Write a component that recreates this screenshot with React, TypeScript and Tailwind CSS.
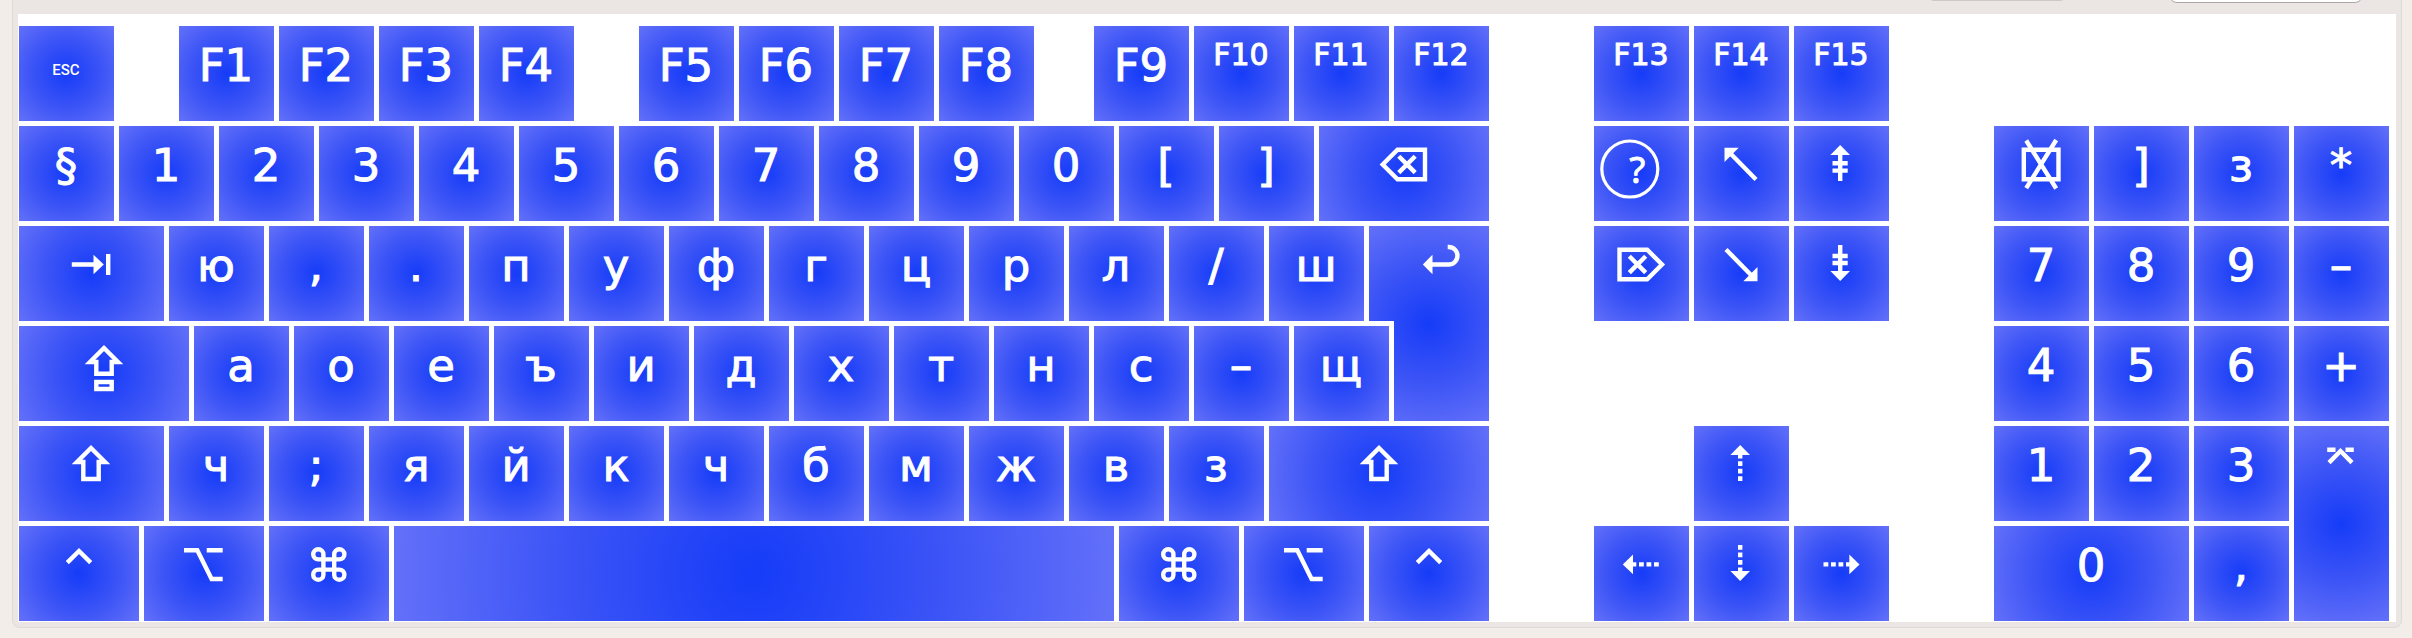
import type { ReactNode } from "react";

const triangle = "fill-white stroke-none";

const icons: Record<string, ReactNode> = {
  tab: (
    <>
      <path d="M10.8 26.5H33M47.2 16V37" />
      <path className={triangle} d="M32.5 16.8L42.8 26.5L32.5 36.3Z" />
    </>
  ),
  caps: (
    <>
      <path d="M30 10L16 24H22.3V35.7H37.7V24H44Z" />
      <path d="M22.3 44H37.7V51H22.3Z" />
    </>
  ),
  shift: <path d="M30 10L16 24H22.3V41H37.7V24H44Z" />,
  control: <path d="M18.3 24.6L30 13L41.7 24.6" />,
  option: <path d="M10 12.2H23.3L37.6 41H48.7M32.7 12.2H48.7" />,
  command: (
    <path d="M24.4 16.3a5.1 5.1 0 1 0-5.1 5.1H40.3a5.1 5.1 0 1 0-5.1-5.1V36.7a5.1 5.1 0 1 0 5.1-5.1H19.3a5.1 5.1 0 1 0 5.1 5.1Z" />
  ),
  backspace: (
    <path d="M51 11.7H23.5L8.7 26.5L23.5 41.2H51ZM24.8 18.2L41.2 34.6M41.2 18.2L24.8 34.6" />
  ),
  forwardDelete: (
    <path d="M8.5 11.7H36.2L51 26.5L36.2 41.2H8.5ZM18.3 18.2L34.7 34.6M34.7 18.2L18.3 34.6" />
  ),
  enter: (
    <>
      <path d="M21 26.5H37.7a8.75 8.75 0 0 0 0-17.5H36.7" />
      <path className={triangle} d="M21.5 16.8L11.8 26.5L21.5 36.3Z" />
    </>
  ),
  help: (
    <>
      <circle cx="18.8" cy="31" r="28" strokeWidth="3.2" />
      <text
        x="26.3"
        y="44.5"
        textAnchor="middle"
        className="fill-white stroke-white font-['Noto_Sans',sans-serif] text-[37px]"
        strokeWidth="0.8"
      >
        ?
      </text>
    </>
  ),
  home: (
    <>
      <path d="M18 14L45 41.5" />
      <path className={triangle} d="M13.5 9.7H27.7L13.5 23.9Z" />
    </>
  ),
  end: (
    <>
      <path d="M15 11.5L42 39" />
      <path className={triangle} d="M46.5 43.2H32.3L46.5 29Z" />
    </>
  ),
  pageUp: (
    <>
      <path d="M29.2 16V43M21.5 25.3H36.7M21.5 32.6H36.7" />
      <path className={triangle} d="M29.2 7L39 17H19.4Z" />
    </>
  ),
  pageDown: (
    <>
      <path d="M29.2 7V34M21.5 18H36.7M21.5 25H36.7" />
      <path className={triangle} d="M29.2 43L39 33H19.4Z" />
    </>
  ),
  up: (
    <>
      <path d="M29.2 43V16.5" strokeDasharray="4.8 2.7" />
      <path className={triangle} d="M29.2 7L39 17H19.4Z" />
    </>
  ),
  down: (
    <>
      <path d="M29.2 7V33.5" strokeDasharray="4.8 2.7" />
      <path className={triangle} d="M29.2 43L39 33H19.4Z" />
    </>
  ),
  left: (
    <>
      <path d="M47.8 26.4H21.5" strokeDasharray="4.8 2.7" />
      <path className={triangle} d="M11.8 26.4L22 16.6V36.2Z" />
    </>
  ),
  right: (
    <>
      <path d="M12.5 26.4H38.8" strokeDasharray="4.8 2.7" />
      <path className={triangle} d="M48.5 26.4L38.3 16.6V36.2Z" />
    </>
  ),
  clear: (
    <path d="M12.8 11.7H47.5V41.2H12.8ZM15.2 2.5L45.2 50.5M45.2 2L15.2 50.2" />
  ),
  keypadEnter: (
    <path d="M18 24.6L29.5 13L41 24.6M16.2 11.7H24.5M34.5 11.7H42.8" />
  ),
};

type KeyProps = {
  label?: string;
  icon?: string;
  name?: string;
  className?: string;
};

function textSize(label: string) {
  if (label === "ESC")
    return "font-[Roboto,sans-serif] text-[15px] leading-[64px] font-medium";
  if (label.length > 2)
    return "text-[30px] leading-[33px] [-webkit-text-stroke:1px_white]";
  return "text-[45px] leading-[55px] [-webkit-text-stroke:1px_white]";
}

function Key({ label, icon, name, className = "flex-[95]" }: KeyProps) {
  return (
    <button
      type="button"
      aria-label={name}
      className={`flex h-full min-w-0 items-start justify-center bg-[radial-gradient(circle_farthest-corner,#163cf8,#3a53f6_50%,#6370f9)] pt-3 text-white ${className}`}
    >
      {icon ? (
        <svg
          width="60"
          height="55"
          viewBox="0 0 60 55"
          aria-hidden="true"
          className="mr-px shrink-0 overflow-visible fill-none stroke-white"
          strokeWidth="4.4"
        >
          {icons[icon]}
        </svg>
      ) : (
        label && <span className={`mr-px ${textSize(label)}`}>{label}</span>
      )}
    </button>
  );
}

function Keys({ labels }: { labels: string }) {
  return labels.split(" ").map((label, i) => <Key key={i} label={label} />);
}

function Row({ children, className = "" }: { children: ReactNode; className?: string }) {
  return <div className={`flex h-[95px] gap-[5px] ${className}`}>{children}</div>;
}

function MainBlock() {
  return (
    <section aria-label="Main keys" className="flex min-w-0 flex-[1470] flex-col gap-[5px]">
      <Row>
        <Key label="ESC" />
        <div className="flex-[55]" />
        <Keys labels="F1 F2 F3 F4" />
        <div className="flex-[55]" />
        <Keys labels="F5 F6 F7 F8" />
        <div className="flex-[50]" />
        <Keys labels="F9 F10 F11 F12" />
      </Row>
      <Row>
        <Keys labels="§ 1 2 3 4 5 6 7 8 9 0 [ ]" />
        <Key icon="backspace" name="Backspace" className="flex-[170]" />
      </Row>
      <div className="grid grid-cols-[1345fr_20px_95fr] grid-rows-[95px_95px] gap-[5px]">
        <Row className="col-start-1 row-start-1">
          <Key icon="tab" name="Tab" className="flex-[145]" />
          <Keys labels="ю , . п у ф г ц р л / ш" />
        </Row>
        <Row className="col-span-2 col-start-1 row-start-2">
          <Key icon="caps" name="Caps Lock" className="flex-[170]" />
          <Keys labels="а о е ъ и д х т н с – щ" />
        </Row>
        <Key
          icon="enter"
          name="Return"
          className="col-span-2 col-start-2 row-span-2 row-start-1 pl-[25px] [clip-path:polygon(0_0,100%_0,100%_100%,25px_100%,25px_95px,0_95px)]"
        />
      </div>
      <Row>
        <Key icon="shift" name="Left Shift" className="flex-[145]" />
        <Keys labels="ч ; я й к ч б м ж в з" />
        <Key icon="shift" name="Right Shift" className="flex-[220]" />
      </Row>
      <Row>
        <Key icon="control" name="Left Control" className="flex-[120]" />
        <Key icon="option" name="Left Option" className="flex-[120]" />
        <Key icon="command" name="Left Command" className="flex-[120]" />
        <Key name="Space" className="flex-[720]" />
        <Key icon="command" name="Right Command" className="flex-[120]" />
        <Key icon="option" name="Right Option" className="flex-[120]" />
        <Key icon="control" name="Right Control" className="flex-[120]" />
      </Row>
    </section>
  );
}

function NavigationBlock() {
  return (
    <section
      aria-label="Navigation keys"
      className="grid min-w-0 flex-[295] grid-cols-3 grid-rows-[repeat(6,95px)] gap-[5px]"
    >
      <Keys labels="F13 F14 F15" />
      <Key icon="help" name="Help" />
      <Key icon="home" name="Home" />
      <Key icon="pageUp" name="Page Up" />
      <Key icon="forwardDelete" name="Forward Delete" />
      <Key icon="end" name="End" />
      <Key icon="pageDown" name="Page Down" />
      <Key icon="up" name="Up" className="col-start-2 row-start-5" />
      <Key icon="left" name="Left" className="row-start-6" />
      <Key icon="down" name="Down" className="row-start-6" />
      <Key icon="right" name="Right" className="row-start-6" />
    </section>
  );
}

function Keypad() {
  return (
    <section
      aria-label="Keypad"
      className="grid min-w-0 flex-[395] grid-cols-4 grid-rows-[repeat(5,95px)] content-end gap-[5px]"
    >
      <Key icon="clear" name="Clear" />
      <Keys labels="] з * 7 8 9 – 4 5 6 + 1 2 3" />
      <Key icon="keypadEnter" name="Enter" className="row-span-2" />
      <Key label="0" className="col-span-2" />
      <Key label="," />
    </section>
  );
}

export default function App() {
  return (
    <div className="min-h-screen bg-[#f2ede9] px-3 pr-[10px] font-['DejaVu_Sans',sans-serif]">
      <main className="rounded-b-lg border border-t-0 border-[#dfdad7] bg-[#ebe6e3] px-[5px] pb-[5px]">
        <header className="flex h-[14px] items-start justify-end gap-[103px] overflow-hidden pr-[33px]">
          <button
            type="button"
            aria-label="Layout options"
            className="-mt-[27px] h-7 w-[138px] rounded-md bg-[#cdc8c5]"
          />
          <input
            type="search"
            aria-label="Search"
            className="-mt-[25px] h-7 w-[194px] rounded-lg border border-[#aaa7a5] bg-white"
          />
        </header>
        <div className="flex gap-[105px] bg-white pt-3 pr-[7px] pb-px pl-px">
          <MainBlock />
          <NavigationBlock />
          <Keypad />
        </div>
      </main>
    </div>
  );
}
